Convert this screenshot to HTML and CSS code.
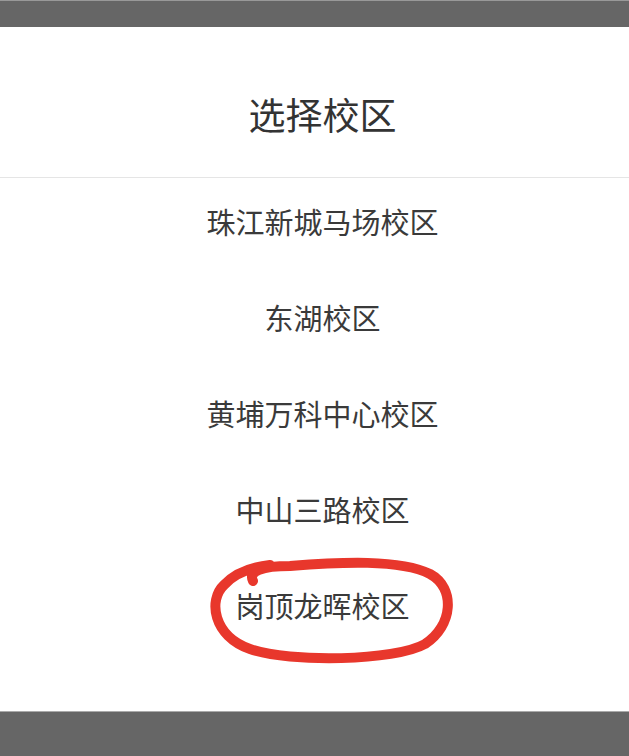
FILE: index.html
```html
<!DOCTYPE html>
<html>
<head>
    <title>选择校区</title>
    <meta name="viewport" content="width=device-width, initial-scale=1.0">
    <link rel="stylesheet" href="styles.css">
</head>
<body>
    <div class="page">
        <div class="top-bar"></div>

        <!-- Campus picker sheet -->
        <div class="sheet">
            <h1 class="sheet-title">选择校区</h1>
            <ul class="campus-list">
                <li class="campus">珠江新城马场校区</li>
                <li class="campus">东湖校区</li>
                <li class="campus">黄埔万科中心校区</li>
                <li class="campus">中山三路校区</li>
                <li class="campus">岗顶龙晖校区</li>
            </ul>
        </div>

        <div class="bottom-bar"></div>

        <!-- hand-drawn mark over the last campus -->
        <svg class="scribble" width="629" height="756" viewBox="0 0 629 756">
            <path d="M253 581 C248 571 262 566 290 566 C340 562 400 559 430 574 C456 588 453 626 425 644 C395 661 290 663 250 649 C213 636 208 600 224 585 C236 572 252 567 270 565"
                  fill="none" stroke="#e8372c" stroke-width="10" stroke-linecap="round" stroke-linejoin="round"/>
        </svg>
    </div>
</body>
</html>
```

FILE: styles.css
```css
body {
    margin: 0;
    font-family: "Noto Sans CJK SC", "Noto Sans", sans-serif;
    background: #fff;
}
.page {
    position: relative;
    width: 629px;
    height: 756px;
    display: flex;
    flex-direction: column;
    overflow: hidden;
}
.top-bar {
    height: 26px;
    background: #666;
    border-top: 1px solid #999;
}
.sheet {
    flex: 1;
    background: #fff;
}
.sheet-title {
    margin: 0;
    padding: 69px 0 0 16px;
    height: 151px;
    box-sizing: border-box;
    font-size: 37px;
    line-height: 37px;
    font-weight: 400;
    color: #333;
    text-align: center;
    border-bottom: 1px solid #e5e5e5;
}
.campus-list {
    list-style: none;
    margin: 0;
    padding: 0 0 0 16px;
}
.campus {
    height: 96px;
    box-sizing: border-box;
    padding-bottom: 11px;
    display: flex;
    align-items: center;
    justify-content: center;
    font-size: 29px;
    color: #3a3a3a;
}
.bottom-bar {
    height: 44px;
    background: #666;
    border-top: 1px solid #aaa;
}
.scribble {
    position: absolute;
    left: 0;
    top: 0;
    pointer-events: none;
}
```
